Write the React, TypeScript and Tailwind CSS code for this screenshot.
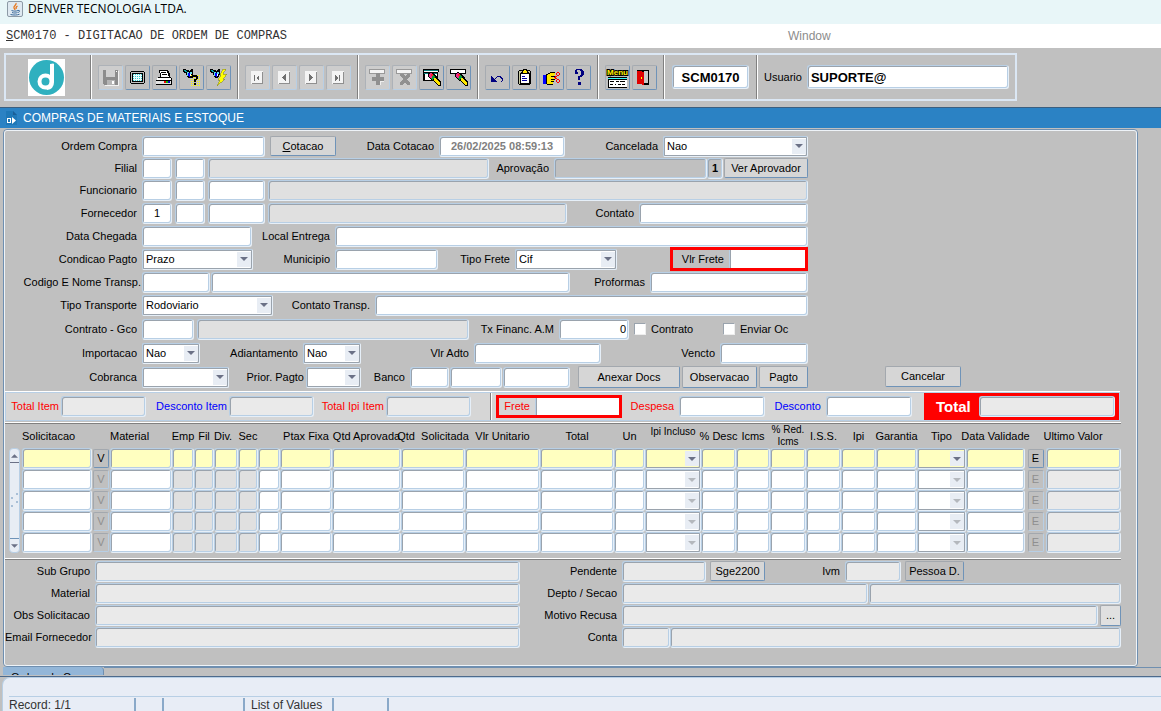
import type { InputHTMLAttributes, ReactNode } from 'react';
import clsx from 'clsx';

type Tone = 'white' | 'dim' | 'light' | 'flat' | 'yellow';

const tones: Record<Tone, string> = {
    white: 'bg-white',
    dim: 'bg-[#e0e0e0]',
    light: 'bg-[#eaeaea]',
    flat: 'bg-[#c0c0c0]',
    yellow: 'bg-[#ffffc0]',
};

interface BoxProps extends InputHTMLAttributes<HTMLInputElement> {
    tone?: Tone;
}

function Box({ tone = 'white', className, ...rest }: BoxProps) {
    return (
        <input
            type="text"
            readOnly={tone === 'dim' || tone === 'light' || tone === 'flat'}
            className={clsx(
                'h-[21px] min-w-0 rounded-[3px] border border-[#b8cfe5] border-r-[#e6eff8] border-b-[#e6eff8] px-1 text-[11px] outline-none',
                'shadow-[inset_1px_1px_0_#9aa3ad,inset_-1px_-1px_0_#b8cfe5]',
                tones[tone],
                className,
            )}
            {...rest}
        />
    );
}

function Label({ htmlFor, className, children }: { htmlFor: string; className?: string; children: ReactNode }) {
    return (
        <label htmlFor={htmlFor} className={clsx('shrink-0 pr-[5px] text-right whitespace-nowrap', className)}>
            {children}
        </label>
    );
}

interface PickProps {
    id?: string;
    label?: string;
    options: string[];
    className?: string;
    tone?: Tone;
    disabled?: boolean;
}

function Pick({ id, label, options, className, tone = 'white', disabled }: PickProps) {
    return (
        <span className={clsx('relative block h-[21px] shrink-0', className)}>
            <select
                id={id}
                aria-label={label}
                disabled={disabled}
                className={clsx(
                    'block h-full w-full appearance-none rounded-[2px] border border-[#b8cfe5] border-r-[#e6eff8] border-b-[#e6eff8] pl-[3px] text-[11px] text-black outline-none',
                    'shadow-[inset_1px_1px_0_#9aa3ad,inset_-1px_-1px_0_#9aa3ad]',
                    tones[tone],
                )}
            >
                {options.map((o) => (
                    <option key={o}>{o}</option>
                ))}
            </select>
            <span className="pointer-events-none absolute top-[3px] right-[2px] bottom-[3px] flex w-[14px] items-center justify-center bg-[#e8edf4]">
                <svg width="8" height="4" viewBox="0 0 8 4" className={disabled ? 'fill-[#b4b8bd]' : 'fill-[#6b7186]'}>
                    <path d="M0 0h8L4 4z" />
                </svg>
            </span>
        </span>
    );
}

function Btn({ className, disabled, children }: { className?: string; disabled?: boolean; children: ReactNode }) {
    return (
        <button
            type="button"
            disabled={disabled}
            className={clsx(
                'shrink-0 rounded-[2px] border border-[#a3a8ae] border-r-[#6f93b8] border-b-[#6f93b8] text-center whitespace-nowrap',
                disabled ? 'text-[#8f8f8f]' : 'text-black',
                className,
            )}
        >
            {children}
        </button>
    );
}

function Row({ tall, children }: { tall?: boolean; children: ReactNode }) {
    return <div className={clsx('flex items-center', tall ? 'h-6' : 'h-[22px]')}>{children}</div>;
}

// amount outlined in red, the input fills the frame
function RedFrame({ id, label, className, labelClass }: { id: string; label: string; className?: string; labelClass?: string }) {
    return (
        <div className={clsx('flex shrink-0 items-center border-[3px] border-[#ff0000]', className)}>
            <Label htmlFor={id} className={labelClass}>{label}</Label>
            <Box id={id} className="h-full! flex-1 rounded-none! border-y-0! border-r-0! shadow-[inset_1px_0_0_#9aa3ad]!" />
        </div>
    );
}

/* ---------- toolbar icons ---------- */

function Icon({ children }: { children: ReactNode }) {
    return (
        <svg width="19" height="19" viewBox="0 0 19 19" shapeRendering="crispEdges" aria-hidden="true">
            {children}
        </svg>
    );
}

const SaveIcon = () => (
    <Icon>
        <path d="M2 2h15v15H3l-1-1z" fill="#8c8c8c" />
        <path d="M5 2h9v7H5z" fill="#d0d0d0" />
        <path d="M6 12h8v5H6z" fill="#b5b5b5" />
        <path d="M11 13h2v3h-2zM15 3h1v1h-1z" fill="#fff" />
        <path d="M17 3h1v15H4v-1h13z" fill="#f2f2f2" />
    </Icon>
);

const ScreenIcon = () => (
    <Icon>
        <path d="M3 3h13v1h1v11h-1v1H3v-1H2V4h1z" fill="#000" />
        <path d="M3 4h13v11H3z" fill="#c0c0c0" />
        <path d="M4 5h11v9H4z" fill="#000" />
        <path d="M5 6h9v7H5z" fill="#eafcfc" />
        {[6, 8, 10, 12].map((y) => (
            <path key={y} d={`M5 ${y}h1v1H5zM7 ${y}h1v1H7zM9 ${y}h1v1H9zM11 ${y}h1v1h-1zM13 ${y}h1v1h-1z`} fill="#35c7cf" />
        ))}
    </Icon>
);

const PrintIcon = () => (
    <Icon>
        <path d="M4 2h9v1h1v2h1v4H5V5H4z" fill="#000" />
        <path d="M5 3h7v2h1v3h1v1H6V5H5z" fill="#fff" />
        <path d="M6 4h5v1H6zM7 6h5v1H7z" fill="#000" />
        <path d="M3 9h13v1h1v4H2v-4h1z" fill="#fff" />
        <path d="M3 9h13v1H3zM1 12h16v1H1z" fill="#000" />
        <path d="M1 13h15v3H1z" fill="#e4e4e4" />
        <path d="M9 13h2v2H9z" fill="#e00" />
        <path d="M11 13h2v2h-2z" fill="#0b0" />
        <path d="M13 13h2v2h-2z" fill="#00c" />
        <path d="M1 16h16v1H1zM16 10h1v6h-1z" fill="#000" />
    </Icon>
);

const Torch = () => (
    <>
        <path d="M1 1h3v1h3v1h1V2h1V1h2v6h-1v2H9v1H6V9H5V7H4V5H2V4H1z" fill="#000" />
        <path d="M2 2h2v1h1v1H3V3H2z" fill="#0aa" />
        <path d="M5 4h2v1H6v3H5zM8 4h2v2H8z" fill="#5fe0f0" />
        <path d="M6 5h2v4H7V8H6z" fill="#00f" />
        <path d="M8 6h1v2H8z" fill="#fff" />
    </>
);

const EnterQueryIcon = () => (
    <Icon>
        <Torch />
        {[7, 9, 11, 13, 15, 17].map((y) => (
            <path key={y} d={`M9 ${y}h1v1H9zM11 ${y}h1v1h-1zM13 ${y}h1v1h-1zM15 ${y}h1v1h-1zM17 ${y}h1v1h-1z`} fill="#ff0" />
        ))}
        <path d="M10 7h5v1h1v3h-1v1h-1v2h-2v-3h2V9h-3v1H9V8h1zM12 15h2v2h-2z" fill="#000" />
    </Icon>
);

const RunQueryIcon = () => (
    <Icon>
        <Torch />
        <path d="M14 1h3l-3 5h4l-4 5h2l-8 7 3-6H9l3-5h-1z" fill="#ff0" stroke="#8a8a2a" strokeWidth=".6" />
    </Icon>
);

function NavIcon({ d }: { d: string }) {
    return (
        <Icon>
            <path d="M3 3h12v13H3z" fill="#f4f4f4" />
            <path d="M14 4h1v12H4v-1h10z" fill="#8f8f8f" />
            <path d={d} fill="#707070" />
        </Icon>
    );
}

const InsertIcon = () => (
    <Icon>
        <path d="M1 1h15v4H1z" fill="#f4f4f4" stroke="#999" strokeWidth="1" />
        <path d="M8 5h4v4h4v4h-4v4H8v-4H4V9h4z" fill="#909090" />
        <path d="M12 13h4v1h-3v3h-1z" fill="#eee" />
    </Icon>
);

const RemoveIcon = () => (
    <Icon>
        <path d="M1 1h15v4H1z" fill="#f4f4f4" stroke="#999" strokeWidth="1" />
        <path d="M5 6h3l2 2 2-2h3v2l-3 3 3 4v2h-3l-2-3-2 3H5v-2l3-4-3-3z" fill="#909090" />
    </Icon>
);

const Pencil = () => (
    <>
        <path d="M6 5l3-1 4 2 6 8v4h-3l-5-5-5-4z" fill="#000" />
        <path d="M7 6l2-1 3 2-3 4-2-2z" fill="#f0268c" />
        <path d="M9 6h2v2H9z" fill="#f22" />
        <path d="M11 7l2 2-3 3-1-1z" fill="#0a9a3a" />
        <path d="M12 10l1-1 5 6v2h-2l-4-4z" fill="#ffe600" />
    </>
);

const ClearRecordIcon = () => (
    <Icon>
        <path d="M1 1h16v3h-1v9H1z" fill="#000" />
        <path d="M2 2h14v1H2z" fill="#087f80" />
        <path d="M2 3h14v1H2zM3 6h12v6H3z" fill="#fff" />
        <path d="M2 5h13v1H2z" fill="#087f80" />
        <Pencil />
    </Icon>
);

const ClearFieldIcon = () => (
    <Icon>
        <path d="M1 1h16v5H1z" fill="#000" />
        <path d="M2 2h14v3H2z" fill="#fff" />
        <Pencil />
    </Icon>
);

const UndoIcon = () => (
    <Icon>
        <path d="M3 8h1v1h1v1h1v1h1v1h1v1h1v1H3z" fill="#000080" />
        <path d="M7 10h1V9h1V8h4v1h1v1h1v3h-1v1h-1v-1h1v-2h-1v-1h-1V9H9v1H8v1H7z" fill="#000080" />
    </Icon>
);

const PasteIcon = () => (
    <Icon>
        <path d="M4 2h11v1h1v13h-1v1H4v-1H3V3h1z" fill="#000" />
        <path d="M4 3h11v13H4z" fill="#c9c9a0" />
        <path d="M6 4h7v1h1v10H5V5h1z" fill="#fff" stroke="#000" strokeWidth="1" />
        <path d="M8 1h3v1h1v3H7V2h1z" fill="#ffe600" stroke="#000" strokeWidth="1" />
        <path d="M7 8h3v1H7zM7 10h5v1H7zM7 12h5v1H7z" fill="#0000a0" />
    </Icon>
);

const HandIcon = () => (
    <Icon>
        <path d="M1 7h3v9H1z" fill="#00f" />
        <path d="M4 7h2V6h2V5h5v2h-1v1h-1v2h2v2h-1v2h-1v2h-1v1H5v-1H4z" fill="#ffe600" />
        <path d="M8 4h5v1H8zM6 5h2v1H6zM4 6h2v1H4zM9 8h4v1H9zM9 11h4v1H9zM9 13h3v1H9zM5 16h6v1H5zM4 7h1v9H4z" fill="#000" />
        <path d="M15 4h2v1h1v2h-1v1h-2V7h-1V5h1zM15 5v2h2V5zM15 11h2v1h1v2h-1v1h-2v-1h-1v-2h1zM15 12v2h2v-2zM13 8h2v1h-2zM13 10h2v1h-2zM12 9h2v1h-2z" fill="#f00" fillRule="evenodd" />
    </Icon>
);

const HelpIcon = () => (
    <Icon>
        <path d="M7 1h6v1h1v1h1v4h-1v1h-1v1h-2v3H9V8h2V7h1V3h-1V2H8v2h1v2H6V2h1zM9 14h3v3H9z" fill="#000080" />
    </Icon>
);

const MenuIcon = () => (
    <svg width="23" height="21" viewBox="0 0 23 21" aria-hidden="true">
        <text
            x="11.500"
            y="8"
            textAnchor="middle"
            fontSize="8"
            fontWeight="bold"
            fontFamily="Liberation Sans, sans-serif"
            fill="#ffef00"
            stroke="#000"
            strokeWidth="2"
            paintOrder="stroke"
        >
            Menu
        </text>
        <g shapeRendering="crispEdges">
            <path d="M2 10h19v11H2z" fill="#000" />
            <path d="M2 11h19v1H2z" fill="#3ff" />
            <path d="M3 13h18v7H3z" fill="#fff" />
            <path d="M4 14h4v1H4zM4 17h3v1H4zM10 14h3v1h-3zM14 14h5v1h-5zM9 17h1v1H9zM12 17h3v1h-3zM16 17h3v1h-3z" fill="#000" />
        </g>
    </svg>
);

const ExitIcon = () => (
    <Icon>
        <path d="M2 2h12v15H8v-1H2z" fill="#000" />
        <path d="M9 3h4v12H9z" fill="#c8c8c8" />
        <path d="M2 3h5v1h2v13H7v-1H2z" fill="#e00000" />
        <path d="M6 9h1v2H6z" fill="#ff0" />
    </Icon>
);

const toolGroups: { name: string; icon: ReactNode; off?: boolean }[][] = [
    [
        { name: 'Salvar', icon: <SaveIcon />, off: true },
        { name: 'Tela', icon: <ScreenIcon /> },
        { name: 'Imprimir', icon: <PrintIcon /> },
        { name: 'Entrar consulta', icon: <EnterQueryIcon /> },
        { name: 'Executar consulta', icon: <RunQueryIcon /> },
    ],
    [
        { name: 'Primeiro', icon: <NavIcon d="M6 7h1v6H6zM11 7v6L8 10z" />, off: true },
        { name: 'Anterior', icon: <NavIcon d="M11 6v7L7 10V9z" />, off: true },
        { name: 'Proximo', icon: <NavIcon d="M7 6v7l4-3V9z" />, off: true },
        { name: 'Ultimo', icon: <NavIcon d="M6 7v6l3-3zM10 7h1v6h-1z" />, off: true },
    ],
    [
        { name: 'Inserir registro', icon: <InsertIcon />, off: true },
        { name: 'Remover registro', icon: <RemoveIcon />, off: true },
        { name: 'Limpar bloco', icon: <ClearRecordIcon /> },
        { name: 'Limpar registro', icon: <ClearFieldIcon /> },
    ],
    [
        { name: 'Desfazer', icon: <UndoIcon /> },
        { name: 'Colar', icon: <PasteIcon /> },
        { name: 'Recortar', icon: <HandIcon /> },
        { name: 'Ajuda', icon: <HelpIcon /> },
    ],
    [
        { name: 'Menu', icon: <MenuIcon /> },
        { name: 'Sair', icon: <ExitIcon /> },
    ],
];

function Toolbar() {
    return (
        <div className="flex h-[59px] pt-[5px] pl-1">
            <div className="flex h-[48px] border-2 border-[#dbe7f4]">
                <div className="flex w-[85px] items-center justify-center border-r border-[#808080] pr-1">
                    <svg width="37" height="37" viewBox="0 0 37 37" role="img" aria-label="Denver">
                        <path d="M0 0h37v37H0z" fill="#fff" />
                        <circle cx="18.500" cy="18.500" r="17.500" fill="#2fb0bf" />
                        <circle cx="17.500" cy="22.500" r="6" fill="none" stroke="#fff" strokeWidth="4" />
                        <path d="M22 5q4-1 4 0v18q0 7-7 8l-2-3q5-1 5-6z" fill="#fff" />
                    </svg>
                </div>
                {toolGroups.map((group) => (
                    <div key={group[0].name} className="flex items-center gap-[2px] border-r border-l border-r-[#808080] border-l-white px-[6px]">
                        {group.map((t) => (
                            <button
                                key={t.name}
                                type="button"
                                aria-label={t.name}
                                disabled={t.off}
                                className={clsx(
                                    'flex size-[25px] items-center justify-center rounded-[2px] border',
                                    t.off
                                        ? 'border-[#adb2b8] border-r-[#b8cfe5] border-b-[#b8cfe5] bg-[#cdcdcd]'
                                        : 'border-[#a6abb1] border-r-[#6f93b8] border-b-[#6f93b8]',
                                )}
                            >
                                {t.icon}
                            </button>
                        ))}
                    </div>
                ))}
                <div className="flex items-center border-r border-l border-r-[#808080] border-l-white px-[7px]">
                    <Box aria-label="Programa" defaultValue="SCM0170" className="h-6! w-[77px] text-center text-[13px]! font-bold" />
                </div>
                <div className="flex items-center border-l border-white pr-[6px] pl-[6px]">
                    <Label htmlFor="usuario">Usuario</Label>
                    <Box id="usuario" defaultValue="SUPORTE@" className="h-6! w-[202px] px-[3px]! text-[13px]! font-bold" />
                </div>
            </div>
        </div>
    );
}

/* ---------- order header ---------- */

function OrderForm() {
    return (
        <form className="flex items-end pt-1 pb-[2px] pl-px">
            <div className="w-[802px]">
                <Row>
                    <Label htmlFor="ordem" className="w-[136px]">Ordem Compra</Label>
                    <Box id="ordem" className="w-[123px]" />
                    <Btn className="ml-[5px] h-5 w-[66px] bg-[#d6d6d6]"><u>C</u>otacao</Btn>
                    <Label htmlFor="dataCotacao" className="w-[103px]">Data Cotacao</Label>
                    <Box id="dataCotacao" defaultValue="26/02/2025 08:59:13" className="w-[126px] text-center font-bold text-[#808080]" />
                    <Label htmlFor="cancelada" className="flex-1">Cancelada</Label>
                    <Pick id="cancelada" options={['Nao', 'Sim']} className="w-[145px]" />
                </Row>
                <Row>
                    <Label htmlFor="filial" className="w-[136px]">Filial</Label>
                    <div className="flex flex-1 gap-[3px]">
                        <Box id="filial" className="w-[30px]" />
                        <Box aria-label="Filial 2" className="w-[30px]" />
                        <Box aria-label="Nome filial" tone="dim" className="flex-1" />
                    </div>
                    <Label htmlFor="aprovacao" className="w-[65px]">Aprovação</Label>
                    <Box id="aprovacao" tone="flat" className="w-[153px]" />
                    <Box aria-label="Nivel" tone="flat" defaultValue="1" className="w-[16px] px-0! text-center font-bold" />
                    <Btn className="ml-px h-5 w-[84px] bg-[#d6d6d6]">Ver Aprovador</Btn>
                </Row>
                <Row>
                    <Label htmlFor="funcionario" className="w-[136px]">Funcionario</Label>
                    <div className="flex flex-1 gap-[3px]">
                        <Box id="funcionario" className="w-[30px]" />
                        <Box aria-label="Funcionario 2" className="w-[30px]" />
                        <Box aria-label="Funcionario 3" className="w-[57px]" />
                        <Box aria-label="Nome funcionario" tone="dim" className="flex-1" />
                    </div>
                </Row>
                <Row tall>
                    <Label htmlFor="fornecedor" className="w-[136px]">Fornecedor</Label>
                    <div className="flex flex-1 gap-[3px]">
                        <Box id="fornecedor" defaultValue="1" className="w-[30px] text-center" />
                        <Box aria-label="Fornecedor 2" className="w-[30px]" />
                        <Box aria-label="Fornecedor 3" className="w-[57px]" />
                        <Box aria-label="Nome fornecedor" tone="dim" className="flex-1" />
                    </div>
                    <Label htmlFor="contato" className="w-[72px]">Contato</Label>
                    <Box id="contato" className="w-[169px]" />
                </Row>
                <Row>
                    <Label htmlFor="dataChegada" className="w-[136px]">Data Chegada</Label>
                    <Box id="dataChegada" className="w-[110px]" />
                    <Label htmlFor="localEntrega" className="w-[83px]">Local Entrega</Label>
                    <Box id="localEntrega" className="flex-1" />
                </Row>
                <Row tall>
                    <Label htmlFor="condicao" className="w-[136px]">Condicao Pagto</Label>
                    <Pick id="condicao" options={['Prazo', 'Vista']} className="w-[111px]" />
                    <Label htmlFor="municipio" className="w-[82px]">Municipio</Label>
                    <Box id="municipio" className="w-[103px]" />
                    <Label htmlFor="tipoFrete" className="w-[77px]">Tipo Frete</Label>
                    <Pick id="tipoFrete" options={['Cif', 'Fob']} className="w-[102px]" />
                    <RedFrame id="vlrFrete" label="Vlr Frete" className="ml-auto h-6 w-[138px]" labelClass="w-[56px]" />
                </Row>
                <Row>
                    <Label htmlFor="transp" className="w-[136px] pr-px!">Codigo E Nome Transp.</Label>
                    <Box id="transp" className="w-[68px]" />
                    <Box aria-label="Nome transportadora" className="ml-px flex-1" />
                    <Label htmlFor="proformas" className="w-[80px]">Proformas</Label>
                    <Box id="proformas" className="w-[158px]" />
                </Row>
                <Row tall>
                    <Label htmlFor="tipoTransporte" className="w-[136px]">Tipo Transporte</Label>
                    <Pick id="tipoTransporte" options={['Rodoviario', 'Aereo', 'Maritimo']} className="w-[131px]" />
                    <Label htmlFor="contatoTransp" className="w-[102px]">Contato Transp.</Label>
                    <Box id="contatoTransp" className="flex-1" />
                </Row>
                <Row tall>
                    <Label htmlFor="contratoGco" className="w-[136px]">Contrato - Gco</Label>
                    <Box id="contratoGco" className="w-[52px]" />
                    <Box aria-label="Nome contrato" tone="dim" className="ml-[3px] flex-1" />
                    <Label htmlFor="txFinanc" className="w-[90px]">Tx Financ. A.M</Label>
                    <Box id="txFinanc" defaultValue="0" className="w-[70px] px-[2px]! text-right" />
                    <label className="flex w-[94px] items-center gap-[5px] pl-[5px]">
                        <input type="checkbox" className="size-3 appearance-none border border-[#9aa3ad] border-r-[#eee] border-b-[#eee] bg-white" />
                        Contrato
                    </label>
                    <label className="flex w-[85px] items-center gap-[5px]">
                        <input type="checkbox" className="size-3 appearance-none border border-[#9aa3ad] border-r-[#eee] border-b-[#eee] bg-white" />
                        Enviar Oc
                    </label>
                </Row>
                <Row tall>
                    <Label htmlFor="importacao" className="w-[136px]">Importacao</Label>
                    <Pick id="importacao" options={['Nao', 'Sim']} className="w-[58px]" />
                    <Label htmlFor="adiantamento" className="w-[103px]">Adiantamento</Label>
                    <Pick id="adiantamento" options={['Nao', 'Sim']} className="w-[58px]" />
                    <Label htmlFor="vlrAdto" className="w-[113px]">Vlr Adto</Label>
                    <Box id="vlrAdto" className="w-[127px]" />
                    <Label htmlFor="vencto" className="flex-1">Vencto</Label>
                    <Box id="vencto" className="w-[88px]" />
                </Row>
                <Row tall>
                    <Label htmlFor="cobranca" className="w-[136px]">Cobranca</Label>
                    <Pick id="cobranca" options={['']} className="w-[87px]" />
                    <Label htmlFor="prior" className="w-[77px] pr-[2px]!">Prior. Pagto</Label>
                    <Pick id="prior" options={['']} className="w-[55px]" />
                    <Label htmlFor="banco" className="w-[49px]">Banco</Label>
                    <div className="flex gap-px">
                        <Box id="banco" className="w-[39px]" />
                        <Box aria-label="Agencia" className="w-[52px]" />
                        <Box aria-label="Conta bancaria" className="w-[67px]" />
                    </div>
                    <div className="flex flex-1 justify-end gap-[2px]">
                        <Btn className="h-[22px] w-[102px] bg-[#d6d6d6]">Anexar Docs</Btn>
                        <Btn className="h-[22px] w-[75px] bg-[#d6d6d6]">Observacao</Btn>
                        <Btn className="h-[22px] w-[49px] bg-[#d6d6d6]">Pagto</Btn>
                    </div>
                </Row>
            </div>
            <Btn className="mb-[2px] ml-[77px] h-[21px] w-[76px] bg-[#d6d6d6]">Cancelar</Btn>
        </form>
    );
}

function Totals() {
    return (
        <section className="mr-4 border-t border-white">
            <div className="flex h-[29px] border border-[#b8cfe5] bg-[#d6d6d6]">
                <div className="flex w-[485px] shrink-0 items-center border-r border-[#808080] pl-[5px] text-[#ff0000]">
                    <Label htmlFor="totItem" className="w-[50px] pr-[2px]!">Total Item</Label>
                    <Box id="totItem" tone="light" className="w-[85px]" />
                    <Label htmlFor="totDesc" className="w-[83px] pr-[2px]! text-[#0000ff]">Desconto Item</Label>
                    <Box id="totDesc" tone="light" className="w-[85px]" />
                    <Label htmlFor="totIpi" className="w-[72px] pr-[2px]!">Total Ipi Item</Label>
                    <Box id="totIpi" tone="light" className="w-[85px]" />
                </div>
                <div className="flex shrink-0 items-center border-l border-white pr-3 pl-1 text-[#ff0000]">
                    <RedFrame id="totFrete" label="Frete" className="h-[23px] w-[126px]" labelClass="w-[36px]" />
                    <Label htmlFor="totDespesa" className="w-[57px]">Despesa</Label>
                    <Box id="totDespesa" className="w-[86px]" />
                    <Label htmlFor="totDesconto" className="w-[61px] text-[#0000ff]">Desconto</Label>
                    <Box id="totDesconto" className="w-[86px]" />
                </div>
                <div className="flex min-w-0 flex-1 items-center bg-[#ff0000] pr-1 pl-3 text-white">
                    <Label htmlFor="total" className="pr-2! text-[15px] font-bold">Total</Label>
                    <Box id="total" tone="light" className="flex-1" />
                </div>
            </div>
        </section>
    );
}

/* ---------- items ---------- */

interface Column {
    id: string;
    head?: ReactNode;
    width: number;
    kind?: 'button' | 'select';
    off?: Tone;
    headClass?: string;
}

const columns: Column[] = [
    { id: 'solicitacao', head: 'Solicitacao', width: 70, headClass: 'text-left' },
    { id: 'V', head: '', width: 18, kind: 'button' },
    { id: 'material', head: 'Material', width: 62, headClass: 'text-left' },
    { id: 'emp', head: 'Emp', width: 22, off: 'dim' },
    { id: 'fil', head: 'Fil', width: 20, off: 'dim' },
    { id: 'div', head: 'Div.', width: 24, off: 'dim', headClass: 'text-left' },
    { id: 'sec', head: 'Sec', width: 20, off: 'dim' },
    { id: 'secNome', head: '', width: 22 },
    { id: 'ptax', head: 'Ptax Fixa', width: 52 },
    { id: 'qtdAprovada', head: 'Qtd Aprovada', width: 69 },
    { id: 'qtdSolicitada', head: <>Qtd&nbsp; Solicitada</>, width: 64 },
    { id: 'vlrUnitario', head: 'Vlr Unitario', width: 75 },
    { id: 'totalLinha', head: 'Total', width: 74 },
    { id: 'un', head: 'Un', width: 31 },
    { id: 'ipiIncluso', head: 'Ipi Incluso', width: 56, kind: 'select', headClass: 'text-[10px] leading-4 align-top' },
    { id: 'desc', head: '% Desc', width: 35 },
    { id: 'icms', head: 'Icms', width: 34 },
    { id: 'redIcms', head: <>% Red.<br />Icms</>, width: 36, headClass: 'text-[10px] leading-3' },
    { id: 'iss', head: 'I.S.S.', width: 35 },
    { id: 'ipi', head: 'Ipi', width: 35 },
    { id: 'garantia', head: 'Garantia', width: 41 },
    { id: 'tipo', head: 'Tipo', width: 49, kind: 'select' },
    { id: 'dataValidade', head: 'Data Validade', width: 59 },
    { id: 'E', width: 21, kind: 'button' },
    { id: 'ultimoValor', head: 'Ultimo Valor', width: 75, off: 'light' },
];

const lines = [0, 1, 2, 3, 4];

function Cell({ col, line }: { col: Column; line: number }) {
    const active = line === 0;
    if (col.kind === 'button') {
        return (
            <Btn disabled={!active} className={clsx('mx-auto block h-[19px] w-4', !active && 'border-r-[#b8cfe5]! border-b-[#b8cfe5]!')}>
                {col.id}
            </Btn>
        );
    }
    if (col.kind === 'select') {
        return <Pick label={`${col.id} ${line + 1}`} options={['']} tone={active ? 'yellow' : 'white'} disabled={!active} />;
    }
    return <Box aria-label={`${col.id} ${line + 1}`} tone={active ? 'yellow' : (col.off ?? 'white')} className="block w-full" />;
}

function Items() {
    return (
        <section className="mr-[15px] flex gap-[2px] pl-1">
            <div className="mt-6 flex w-[11px] shrink-0 flex-col justify-between rounded-[4px] border border-[#b8cfe5] bg-[#e8edf4]">
                <button type="button" aria-label="Linha anterior" className="flex h-[14px] items-center justify-center border-b border-[#6b7186]">
                    <svg width="7" height="4" viewBox="0 0 8 4" className="fill-[#6b7186]"><path d="M0 4h8L4 0z" /></svg>
                </button>
                <svg width="9" height="18" viewBox="0 0 9 18" className="fill-[#a9bfd6]" aria-hidden="true">
                    <path d="M6 1h2v2H6zM1 5h2v2H1zM6 9h2v2H6zM1 13h2v2H1z" />
                </svg>
                <button type="button" aria-label="Proxima linha" className="flex h-[14px] items-center justify-center border-t border-[#6f93b8]">
                    <svg width="7" height="4" viewBox="0 0 8 4" className="fill-[#6b7186]"><path d="M0 0h8L4 4z" /></svg>
                </button>
            </div>
            <table className="w-full table-fixed border-collapse">
                <colgroup>
                    {columns.map((c) => (
                        <col key={c.id} style={{ width: c.width }} />
                    ))}
                </colgroup>
                <thead>
                    <tr className="h-6">
                        {columns
                            .filter((c) => c.head !== undefined)
                            .map((c) => (
                                <th key={c.id} colSpan={c.id === 'ultimoValor' ? 2 : 1} className={clsx('p-0 font-normal whitespace-nowrap', c.headClass)}>
                                    <span className="inline-flex w-full justify-center [.text-left>&]:justify-start">
                                        <span className="text-center">{c.head}</span>
                                    </span>
                                </th>
                            ))}
                    </tr>
                </thead>
                <tbody>
                    {lines.map((line) => (
                        <tr key={line} className="h-[21px]">
                            {columns.map((c) => (
                                <td key={c.id} className="p-0">
                                    <Cell col={c} line={line} />
                                </td>
                            ))}
                        </tr>
                    ))}
                </tbody>
            </table>
        </section>
    );
}

function Details() {
    return (
        <section className="mr-[15px] flex pb-[17px]">
            <div className="w-[515px] shrink-0">
                {['Sub Grupo', 'Material', 'Obs Solicitacao', 'Email Fornecedor'].map((name) => (
                    <Row key={name}>
                        <Label htmlFor={name} className="w-[90px]">{name}</Label>
                        <Box id={name} tone="light" className="flex-1" />
                    </Row>
                ))}
            </div>
            <div className="flex-1">
                <Row>
                    <Label htmlFor="pendente" className="w-[102px]">Pendente</Label>
                    <Box id="pendente" tone="light" className="w-[84px]" />
                    <Btn className="ml-1 h-5 w-[55px] bg-[#d6d6d6]">Sge2200</Btn>
                    <Label htmlFor="ivm" className="w-[80px]">Ivm</Label>
                    <Box id="ivm" tone="light" className="w-[56px]" />
                    <Btn className="ml-1 h-5 w-[59px]">Pessoa D.</Btn>
                </Row>
                <Row>
                    <Label htmlFor="depto" className="w-[102px]">Depto / Secao</Label>
                    <Box id="depto" tone="light" className="w-[246px]" />
                    <Box aria-label="Secao" tone="light" className="ml-px flex-1" />
                </Row>
                <Row>
                    <Label htmlFor="motivo" className="w-[102px]">Motivo Recusa</Label>
                    <Box id="motivo" tone="light" className="flex-1" />
                    <Btn className="ml-[2px] h-[21px] w-[21px] bg-[#e0e0e0]">...</Btn>
                </Row>
                <Row>
                    <Label htmlFor="conta" className="w-[102px]">Conta</Label>
                    <Box id="conta" tone="light" className="w-[48px]" />
                    <Box aria-label="Nome conta" tone="light" className="flex-1" />
                </Row>
            </div>
        </section>
    );
}

function Divider() {
    return <div className="mr-[15px] h-[2px] border-t border-b border-t-white border-b-[#808080]" />;
}

export default function App() {
    return (
        <div className="flex min-h-screen flex-col bg-[#c0c0c0] font-['Liberation_Sans',Arial,sans-serif] text-[11px] leading-[13px] text-black">
            <header className="flex h-6 items-center gap-[5px] bg-[#e8f6f8] pb-1.5 pl-[7px]">
                <svg width="16" height="16" viewBox="0 0 16 16" aria-hidden="true">
                    <rect x=".5" y=".5" width="15" height="15" rx="1.500" fill="#dfe9f1" stroke="#8d9aa6" />
                    <path d="M9 2c1 2-3 3-2 5 .3.700 1 1 .8 2M10.500 5c-1.500.8-2 1.500-1.200 3" fill="none" stroke="#e8761b" strokeWidth="1.300" />
                    <path d="M4.500 9.500c2 .8 5 .8 6.500 0M5 11.500c2 .7 4 .7 5.500 0M3.500 13.500c3 .8 7 .7 9-.3M11 9.500c2.300-.6 2 1.500 0 2" fill="none" stroke="#3d6c9c" />
                </svg>
                <h1 className="font-['Open_Sans','Noto_Sans',sans-serif] text-xs leading-4">DENVER TECNOLOGIA LTDA.</h1>
            </header>
            <nav className="flex h-6 items-center bg-white pl-[6px]">
                <a href="#programa" className="w-[782px] font-['Liberation_Mono',monospace] text-xs text-[#333]">
                    <u>S</u>CM0170 - DIGITACAO DE ORDEM DE COMPRAS
                </a>
                <a href="#window" className="text-xs text-[#8c8c8c]">Window</a>
            </nav>
            <Toolbar />
            <div className="flex h-[21px] items-center gap-1 border-t border-[#3b5f80] bg-[#2b82c4] pl-[5px] text-white">
                <svg width="14" height="16" viewBox="0 0 14 16" aria-hidden="true">
                    <path d="M1 1h7l4 4v10H1z" fill="#1f78b8" />
                    <path d="M8 1l4 4H8z" fill="#1a5f98" />
                    <path d="M2 8h4v1H3v3h3v1H2zM5 9h1v3H5zM7 7l4 3.500L7 14z" fill="#fff" />
                </svg>
                <h2 className="text-xs leading-4">COMPRAS DE MATERIAIS E ESTOQUE</h2>
            </div>
            <main className="mt-px mr-[23px] ml-[3px] rounded-[4px] border border-[#6f8fb0]">
                <div className="rounded-[3px] border border-[#eef3f8]">
                    <OrderForm />
                    <Totals />
                    <div className="pt-px">
                        <Divider />
                    </div>
                    <Items />
                    <div className="mt-[5px]">
                        <Divider />
                    </div>
                    <Details />
                </div>
            </main>
            <div className="flex h-[10px] items-start border-b border-[#4d6a8c]">
                <button type="button" className="ml-[3px] h-2 w-[101px] overflow-hidden rounded-tr border-r border-[#6f8fb0] bg-[#93b6d8] pl-2 text-left">
                    <span className="block pt-1 whitespace-nowrap">Ordem de Compra</span>
                </button>
                <div className="flex-1 border-t border-[#6f8fb0]" />
            </div>
            <footer className="ml-[2px] flex-1 rounded-tl-lg border-t border-l border-[#b8cfe5] bg-[#e8edf6]">
                <div className="mt-[18px] ml-[6px] flex h-[15px] border-t border-[#b8cfe5] pt-px text-xs leading-[14px] text-[#333]">
                    <span className="w-[127px] border-r-2 border-[#8aa9c9]">Record: 1/1</span>
                    <span className="w-7 border-r-2 border-[#8aa9c9]" />
                    <span className="w-[81px] border-r-2 border-[#8aa9c9]" />
                    <span className="w-[89px] border-r-2 border-[#8aa9c9] pl-[6px]">List of Values</span>
                    <span className="w-[55px] border-r-2 border-[#8aa9c9]" />
                </div>
            </footer>
        </div>
    );
}
